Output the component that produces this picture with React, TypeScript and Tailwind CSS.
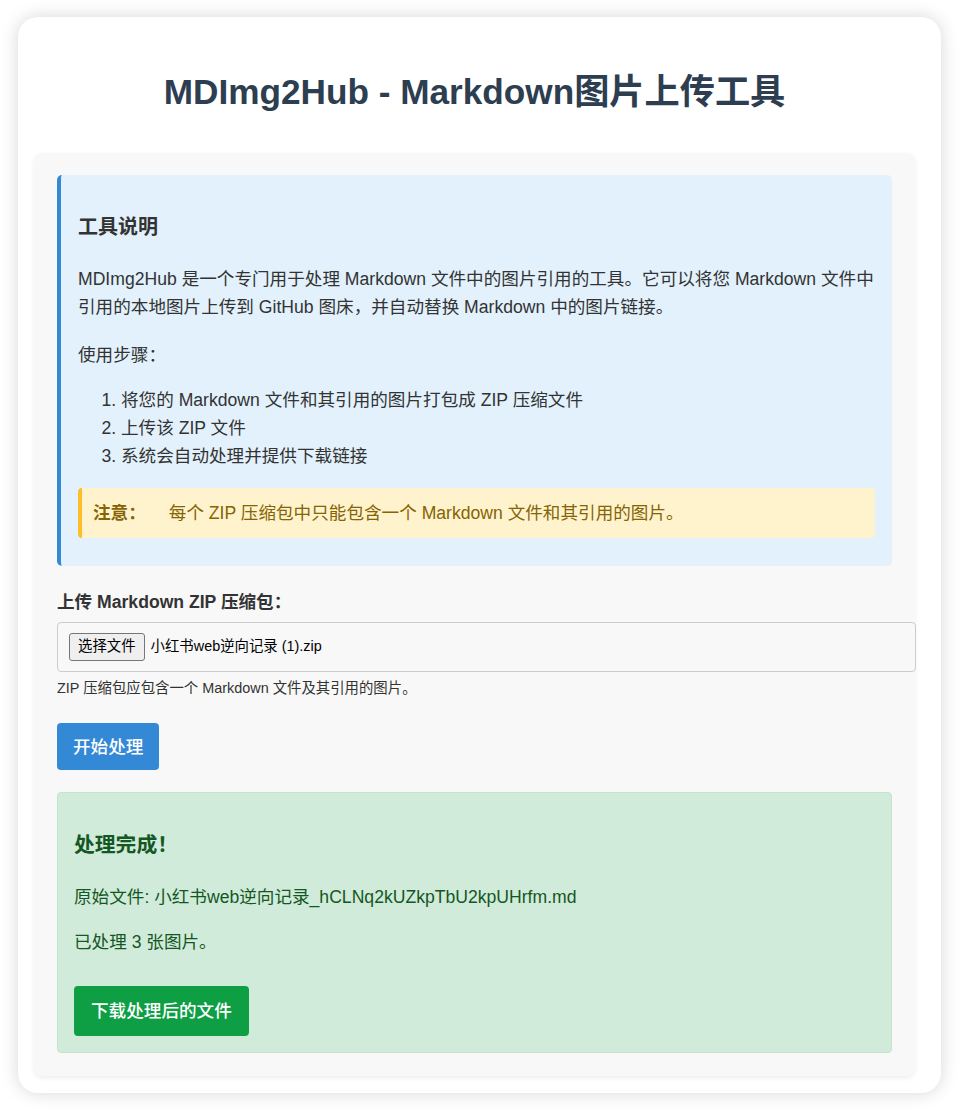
export default function App() {
  return (
    <div className="min-h-[1111px] w-full bg-white pt-[17px] pl-[18px] font-['Liberation_Sans','Noto_Sans_CJK_SC',sans-serif] text-[#333]">
      <div className="w-[923px] h-[1076px] rounded-[20px] bg-white shadow-[0_0_18px_rgba(0,0,0,0.16)] pl-[16px] pr-[26px] pt-[53px]">
        <h1 className="text-center text-[35.2px] leading-[44px] font-bold text-[#2c3e50]">
          MDImg2Hub - Markdown图片上传工具
        </h1>

        <div className="mt-[39px] bg-[#f8f8f8] rounded-[8px] shadow-[0_2px_5px_rgba(0,0,0,0.07)] px-[23px] pt-[22px] pb-[23px] text-[17.6px]">
          {/* info box */}
          <div className="bg-[#e2f1fc] border-l-4 border-[#3489d6] rounded-[5px] pl-[17px] pr-[17px] pt-[38px] pb-[28px]">
            <h3 className="text-[20px] leading-[28px] font-bold text-[#333]">工具说明</h3>
            <p className="mt-[24px] leading-[28.3px]">
              MDImg2Hub 是一个专门用于处理 Markdown 文件中的图片引用的工具。它可以将您 Markdown 文件中引用的本地图片上传到 GitHub 图床，并自动替换 Markdown 中的图片链接。
            </p>
            <p className="mt-[19px] leading-[28px]">使用步骤：</p>
            <ol className="mt-[17px] list-decimal pl-[43px] leading-[28.2px]">
              <li>将您的 Markdown 文件和其引用的图片打包成 ZIP 压缩文件</li>
              <li>上传该 ZIP 文件</li>
              <li>系统会自动处理并提供下载链接</li>
            </ol>
            <div className="mt-[18px] h-[50px] flex items-center bg-[#fff3cd] border-l-4 border-[#fbbf2a] rounded-[4px] pl-[11px] text-[#856404]">
              <strong className="font-bold mr-[23px]">注意：</strong>
              <span>每个 ZIP 压缩包中只能包含一个 Markdown 文件和其引用的图片。</span>
            </div>
          </div>

          {/* upload */}
          <label className="block mt-[22px] leading-[28px] font-bold text-[#333]">上传 Markdown ZIP 压缩包：</label>
          <div className="mt-[6px] h-[50px] w-[calc(100%+24px)] border border-[#ccc] rounded-[4px] flex items-center px-[11px] text-[14.4px] text-black">
            <span className="h-[28px] flex items-center px-[8px] border border-[#767676] rounded-[3px] bg-[#efefef]">选择文件</span>
            <span className="ml-[6px]">小红书web逆向记录 (1).zip</span>
          </div>
          <p className="mt-[6px] text-[14.4px] leading-[20px] text-[#333]">ZIP 压缩包应包含一个 Markdown 文件及其引用的图片。</p>

          <button className="mt-[25px] h-[47px] px-[16px] rounded-[4px] bg-[#3489d6] text-white text-[17.6px] font-medium leading-[28px]">
            开始处理
          </button>

          {/* result */}
          <div className="mt-[22px] bg-[#d0ebd9] border border-[#c3e6cb] rounded-[4px] px-[16px] pt-[38px] pb-[16px] text-[#155724]">
            <h3 className="text-[20.8px] leading-[28px] font-bold">处理完成！</h3>
            <p className="mt-[24px] leading-[28px]">原始文件: 小红书web逆向记录_hCLNq2kUZkpTbU2kpUHrfm.md</p>
            <p className="mt-[17px] leading-[28px]">已处理 3 张图片。</p>
            <button className="mt-[30px] h-[50px] px-[17px] rounded-[4px] bg-[#0e9f45] text-white text-[17.6px] font-medium leading-[28px]">
              下载处理后的文件
            </button>
          </div>
        </div>
      </div>
    </div>
  );
}
